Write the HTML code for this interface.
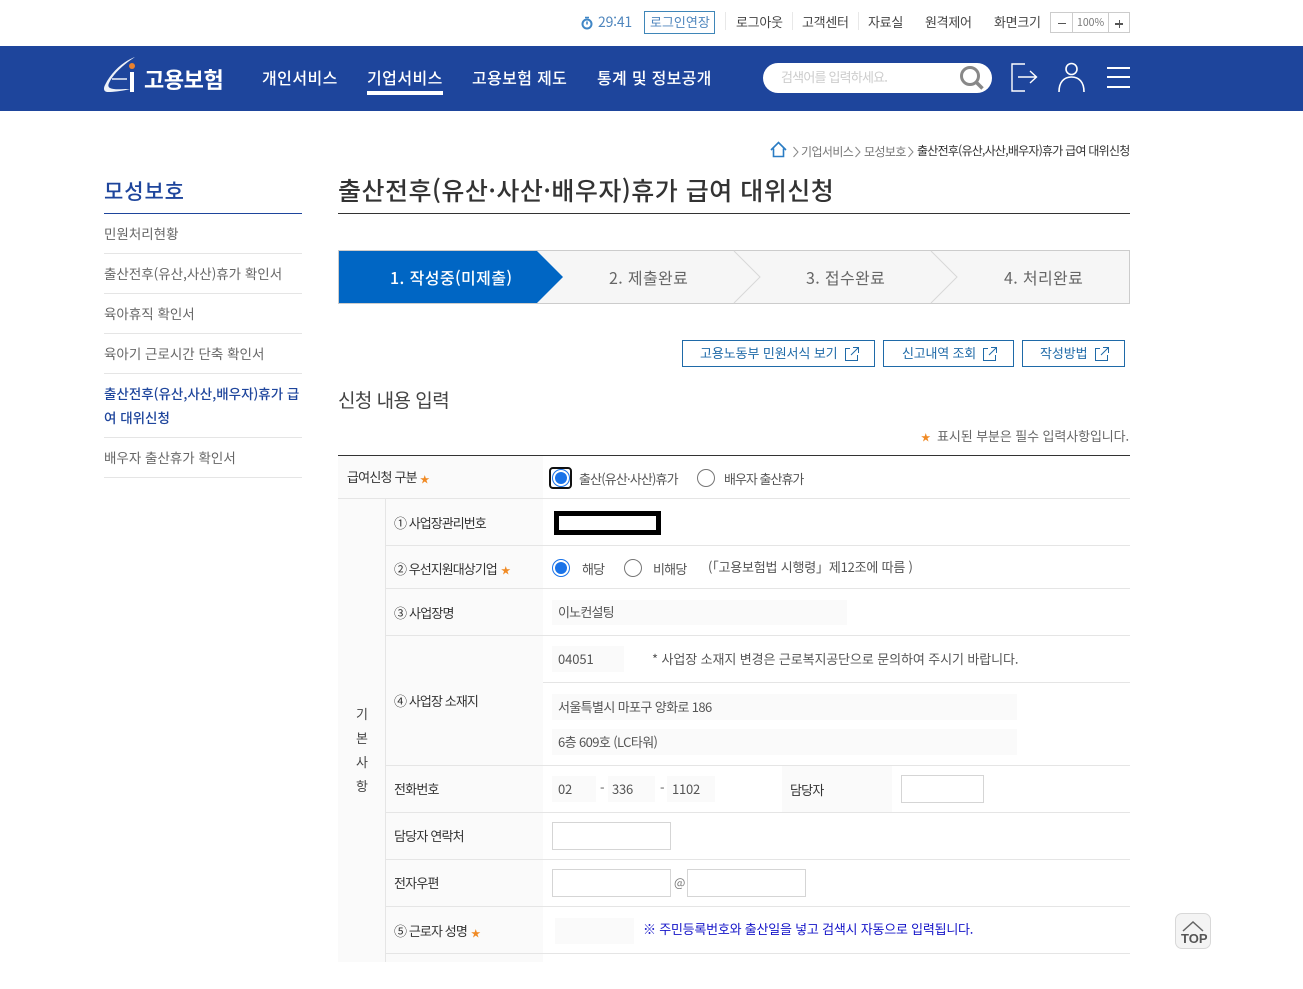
<!DOCTYPE html>
<html lang="ko"><head><meta charset="utf-8"><title>출산전후휴가 급여 대위신청</title>
<style>
html,body{margin:0;padding:0;background:#fff}
body{width:1303px;height:989px;position:relative;overflow:hidden;font-family:"Liberation Sans","Noto Sans CJK KR",sans-serif;color:#444}
.t{position:absolute;white-space:nowrap;line-height:20px;font-size:13px;letter-spacing:-.8px;font-family:"Noto Sans CJK KR",sans-serif;font-weight:400}
.b{position:absolute;box-sizing:border-box}
.w{color:#fff;font-size:16px;font-weight:500;letter-spacing:.45px}
.hl{position:absolute;height:1px;background:#e5e5e5}
.g{position:absolute;background:#fafafa}
.f{position:absolute;background:#fafafa}
.i{position:absolute;box-sizing:border-box;background:#fff;border:1px solid #d5d5d5}
.s{color:#f08a24}
.m{color:#555;font-size:13px}
.side{color:#666;font-size:13.5px;letter-spacing:0}
.top{letter-spacing:-.3px}
.btn{position:absolute;box-sizing:border-box;height:27px;border:1px solid #1f6aa8;background:#fff;top:340px}
.step{color:#666;font-size:16px;letter-spacing:.35px}
.bc{color:#777;font-size:12px;letter-spacing:-.6px}
</style></head><body>

<!-- top bar -->
<svg class="b" style="left:580px;top:16px" width="14" height="14" viewBox="0 0 14 14"><circle cx="7" cy="8" r="4.5" fill="none" stroke="#3f86c6" stroke-width="2"/><path d="M5 1.500h4M7 5.500v3" stroke="#3f86c6" stroke-width="1.600" fill="none"/></svg>
<span class="t" style="left:598px;top:12px;color:#4f86bd;font-size:14px;letter-spacing:-.2px">29:41</span>
<div class="b" style="left:644px;top:11px;width:71px;height:23px;border:1px solid #3f86b8"></div>
<span class="t top" style="left:650px;top:12px;color:#4f86bd;letter-spacing:0">로그인연장</span>
<div class="b" style="left:725px;top:12px;width:1px;height:18px;background:#e8e8e8"></div>
<span class="t top" style="left:736px;top:12px">로그아웃</span>
<div class="b" style="left:792px;top:12px;width:1px;height:18px;background:#e8e8e8"></div>
<span class="t top" style="left:802px;top:12px">고객센터</span>
<div class="b" style="left:858px;top:12px;width:1px;height:18px;background:#e8e8e8"></div>
<span class="t top" style="left:868px;top:12px">자료실</span>
<span class="t top" style="left:925px;top:12px">원격제어</span>
<span class="t top" style="left:994px;top:12px">화면크기</span>
<div class="b" style="left:1050px;top:12px;width:80px;height:21px;border:1px solid #ccc"></div>
<div class="b" style="left:1072px;top:12px;width:1px;height:21px;background:#ccc"></div>
<div class="b" style="left:1108px;top:12px;width:1px;height:21px;background:#ccc"></div>
<div class="b" style="left:1058px;top:23px;width:8px;height:1px;background:#555"></div>
<span class="t" style="left:1077px;top:13px;font-size:10.500px;letter-spacing:0;color:#777">100%</span>
<div class="b" style="left:1115px;top:23px;width:8px;height:1.500px;background:#555"></div>
<div class="b" style="left:1118.500px;top:20px;width:1.500px;height:8px;background:#555"></div>

<!-- header -->
<div class="b" style="left:0;top:46px;width:1303px;height:65px;background:#1e459c"></div>
<svg class="b" style="left:102px;top:55px" width="38" height="40" viewBox="0 0 38 40"><path d="M33 2C22 6 10 16 3 30c-2 4-1 7 3 7 6 0 14-1 22-3-8 0-16 1-20-1-2-1-2-3-1-5C11 19 22 9 33 2z" fill="#eef2f8"/><path d="M10 24h15" stroke="#eef2f8" stroke-width="1.500"/><rect x="28" y="17" width="4" height="20" fill="#fff"/><circle cx="30" cy="11" r="3" fill="#e9822f"/></svg>
<span class="t" style="left:144px;top:68px;color:#fff;font-size:22px;line-height:22px;font-weight:700;letter-spacing:-.4px">고용보험</span>
<span class="t w" style="left:262px;top:67px">개인서비스</span>
<span class="t w" style="left:367px;top:67px">기업서비스</span>
<div class="b" style="left:367px;top:91px;width:76px;height:4px;background:#fff"></div>
<span class="t w" style="left:472px;top:67px;letter-spacing:.35px">고용보험 제도</span>
<span class="t w" style="left:597px;top:67px;letter-spacing:.3px">통계 및 정보공개</span>
<div class="b" style="left:763px;top:63px;width:229px;height:30px;border-radius:15px;background:#fff"></div>
<span class="t" style="left:781px;top:67px;color:#ccc">검색어를 입력하세요.</span>
<svg class="b" style="left:958px;top:64px" width="28" height="28" viewBox="0 0 28 28"><circle cx="12" cy="12" r="8.500" fill="none" stroke="#888" stroke-width="3"/><path d="M18.500 18.500l6 6" stroke="#888" stroke-width="3.500"/></svg>
<svg class="b" style="left:1010px;top:62px" width="30" height="30" viewBox="0 0 30 30" fill="none" stroke="#fff" stroke-width="1.400"><path d="M15 2H2v27h13M8 15h18M20 9l6.500 6-6.500 6"/></svg>
<svg class="b" style="left:1056px;top:61px" width="30" height="32" viewBox="0 0 30 32" fill="none" stroke="#fff" stroke-width="1.600"><circle cx="15.500" cy="8" r="5.500"/><path d="M3 31c0-10 5-15 12.500-15S28 21 28 31"/></svg>
<div class="b" style="left:1107px;top:67px;width:23px;height:2px;background:#fff"></div>
<div class="b" style="left:1107px;top:76px;width:23px;height:2px;background:#fff"></div>
<div class="b" style="left:1107px;top:86px;width:23px;height:2px;background:#fff"></div>

<!-- breadcrumb -->
<svg class="b" style="left:770px;top:141px" width="17" height="17" viewBox="0 0 17 17" fill="none" stroke="#2a7cc4" stroke-width="1.600"><path d="M1 9l7.500-7.500L16 9M3.500 7.500V15.500h10V7.500"/></svg>
<svg class="b" style="left:792px;top:146px" width="122" height="12" viewBox="0 0 122 12" fill="none" stroke="#888"><path d="M1.500 1l4.500 5-4.500 5M63.500 1l4.500 5-4.500 5M116.500 1l4.500 5-4.500 5"/></svg>
<span class="t bc" style="left:801px;top:142px">기업서비스</span>
<span class="t bc" style="left:864px;top:142px">모성보호</span>
<span class="t" style="left:917px;top:141px;color:#333;font-size:12px;letter-spacing:-.75px">출산전후(유산,사산,배우자)휴가 급여 대위신청</span>

<!-- side -->
<span class="t" style="left:104px;top:180px;color:#1e459c;font-size:21px;line-height:22px;font-weight:500;letter-spacing:.9px">모성보호</span>
<div class="b" style="left:104px;top:213px;width:198px;height:1px;background:#1e459c"></div>
<span class="t side" style="left:104px;top:223px">민원처리현황</span>
<div class="hl" style="left:104px;top:253px;width:198px"></div>
<span class="t side" style="left:104px;top:263px">출산전후(유산,사산)휴가 확인서</span>
<div class="hl" style="left:104px;top:293px;width:198px"></div>
<span class="t side" style="left:104px;top:303px">육아휴직 확인서</span>
<div class="hl" style="left:104px;top:333px;width:198px"></div>
<span class="t side" style="left:104px;top:343px">육아기 근로시간 단축 확인서</span>
<div class="hl" style="left:104px;top:373px;width:198px"></div>
<span class="t side" style="left:104px;top:383px;color:#1e459c;font-weight:500">출산전후(유산,사산,배우자)휴가 급</span>
<span class="t side" style="left:104px;top:407px;color:#1e459c;font-weight:500">여 대위신청</span>
<div class="hl" style="left:104px;top:437px;width:198px"></div>
<span class="t side" style="left:104px;top:447px">배우자 출산휴가 확인서</span>
<div class="hl" style="left:104px;top:477px;width:198px"></div>

<!-- title -->
<span class="t" style="left:338px;top:174px;color:#333;font-size:25px;line-height:32px;font-weight:500;letter-spacing:.5px">출산전후(유산·사산·배우자)휴가 급여 대위신청</span>
<div class="b" style="left:338px;top:213px;width:792px;height:1px;background:#333"></div>

<!-- steps -->
<svg class="b" style="left:338px;top:250px" width="792" height="54" viewBox="0 0 792 54">
<rect x=".5" y=".5" width="791" height="53" fill="#f6f6f6" stroke="#ccc"/>
<path d="M396 1l26 26-26 26M593 1l26 26-26 26" fill="none" stroke="#d8d8d8"/>
<path d="M1 1H199L225 27 199 53H1z" fill="#0066c4"/>
</svg>
<span class="t" style="left:390px;top:267px;color:#fff;font-size:16px;font-weight:500;letter-spacing:.4px">1. 작성중(미제출)</span>
<span class="t step" style="left:609px;top:267px">2. 제출완료</span>
<span class="t step" style="left:806px;top:267px">3. 접수완료</span>
<span class="t step" style="left:1004px;top:267px">4. 처리완료</span>

<!-- buttons -->
<div class="btn" style="left:682px;width:193px"></div>
<span class="t" style="left:700px;top:343px;color:#1f6aa8;letter-spacing:-.1px">고용노동부 민원서식 보기</span>
<div class="btn" style="left:883px;width:131px"></div>
<span class="t" style="left:902px;top:343px;color:#1f6aa8;letter-spacing:-.2px">신고내역 조회</span>
<div class="btn" style="left:1022px;width:103px"></div>
<span class="t" style="left:1040px;top:343px;color:#1f6aa8;letter-spacing:-.1px">작성방법</span>
<svg class="b" style="left:845px;top:347px" width="14" height="14" viewBox="0 0 14 14" fill="none" stroke="#1f6aa8"><path d="M5 1.500H.5v12h12V8M8 .5h5.500V6M13 1L6 8"/></svg>
<svg class="b" style="left:983px;top:347px" width="14" height="14" viewBox="0 0 14 14" fill="none" stroke="#1f6aa8"><path d="M5 1.500H.5v12h12V8M8 .5h5.500V6M13 1L6 8"/></svg>
<svg class="b" style="left:1095px;top:347px" width="14" height="14" viewBox="0 0 14 14" fill="none" stroke="#1f6aa8"><path d="M5 1.500H.5v12h12V8M8 .5h5.500V6M13 1L6 8"/></svg>

<!-- section -->
<span class="t" style="left:338px;top:389px;color:#444;font-size:19px;line-height:22px;letter-spacing:-.55px">신청 내용 입력</span>
<span class="t s" style="left:921px;top:427px;font-size:9.500px">★</span>
<span class="t" style="left:937px;top:426px;color:#666;letter-spacing:-.1px">표시된 부분은 필수 입력사항입니다.</span>
<div class="b" style="left:338px;top:455px;width:792px;height:1px;background:#333"></div>

<!-- table backgrounds -->
<div class="g" style="left:338px;top:456px;width:205px;height:42px"></div>
<div class="g" style="left:338px;top:499px;width:47px;height:463px"></div>
<div class="g" style="left:386px;top:499px;width:157px;height:463px"></div>
<div class="b" style="left:385px;top:499px;width:1px;height:463px;background:#e5e5e5"></div>
<div class="hl" style="left:338px;top:498px;width:792px"></div>
<div class="hl" style="left:386px;top:545px;width:744px"></div>
<div class="hl" style="left:386px;top:588px;width:744px"></div>
<div class="hl" style="left:386px;top:635px;width:744px"></div>
<div class="hl" style="left:543px;top:682px;width:587px"></div>
<div class="hl" style="left:386px;top:765px;width:744px"></div>
<div class="hl" style="left:386px;top:812px;width:744px"></div>
<div class="hl" style="left:386px;top:859px;width:744px"></div>
<div class="hl" style="left:386px;top:906px;width:744px"></div>
<div class="hl" style="left:386px;top:953px;width:744px"></div>

<!-- row labels -->
<span class="t m" style="left:347px;top:467px;color:#333">급여신청 구분</span><span class="t s" style="left:420px;top:469px;font-size:9.500px">★</span>
<span class="t m" style="left:394px;top:513px;color:#333;letter-spacing:-.95px">① 사업장관리번호</span>
<span class="t m" style="left:394px;top:559px;color:#333;letter-spacing:-.95px">② 우선지원대상기업</span><span class="t s" style="left:501px;top:560px;font-size:9.500px">★</span>
<span class="t m" style="left:394px;top:603px;color:#333">③ 사업장명</span>
<span class="t m" style="left:394px;top:691px;color:#333;letter-spacing:-.9px">④ 사업장 소재지</span>
<span class="t m" style="left:394px;top:779px;color:#333">전화번호</span>
<span class="t m" style="left:394px;top:826px;color:#333">담당자 연락처</span>
<span class="t m" style="left:394px;top:873px;color:#333">전자우편</span>
<span class="t m" style="left:394px;top:921px;color:#333;letter-spacing:-.9px">⑤ 근로자 성명</span><span class="t s" style="left:471px;top:923px;font-size:9.500px">★</span>
<span class="t m" style="left:356px;top:704px;color:#444">기</span>
<span class="t m" style="left:356px;top:728px;color:#444">본</span>
<span class="t m" style="left:356px;top:752px;color:#444">사</span>
<span class="t m" style="left:356px;top:776px;color:#444">항</span>

<!-- row 1 -->
<div class="b" style="left:549px;top:467px;width:23px;height:22px;border:2px solid #111;border-radius:4px"></div>
<svg class="b" style="left:552px;top:469px" width="18" height="18" viewBox="0 0 18 18"><circle cx="9" cy="9" r="8.500" fill="#fff" stroke="#1a73e8"/><circle cx="9" cy="9" r="6" fill="#1a73e8"/></svg>
<span class="t m" style="left:579px;top:469px;color:#555;letter-spacing:-.85px">출산(유산·사산)휴가</span>
<svg class="b" style="left:697px;top:469px" width="18" height="18" viewBox="0 0 18 18"><circle cx="9" cy="9" r="8.500" fill="#fff" stroke="#767676"/></svg>
<span class="t m" style="left:724px;top:469px;color:#555;letter-spacing:-1px">배우자 출산휴가</span>

<!-- business number -->
<div class="b" style="left:554px;top:511px;width:107px;height:24px;border:5px solid #000;background:#fff"></div>

<!-- priority -->
<svg class="b" style="left:552px;top:559px" width="18" height="18" viewBox="0 0 18 18"><circle cx="9" cy="9" r="8.500" fill="#fff" stroke="#1a73e8"/><circle cx="9" cy="9" r="6" fill="#1a73e8"/></svg>
<span class="t m" style="left:582px;top:559px;color:#555">해당</span>
<svg class="b" style="left:624px;top:559px" width="18" height="18" viewBox="0 0 18 18"><circle cx="9" cy="9" r="8.500" fill="#fff" stroke="#767676"/></svg>
<span class="t m" style="left:653px;top:559px;color:#555">비해당</span>
<span class="t m" style="left:708px;top:557px;color:#555;letter-spacing:-.2px">(「고용보험법 시행령」제12조에 따름 )</span>

<!-- name -->
<div class="f" style="left:552px;top:600px;width:295px;height:25px"></div>
<span class="t m" style="left:558px;top:602px;color:#555">이노컨설팅</span>

<!-- address -->
<div class="f" style="left:552px;top:646px;width:72px;height:26px"></div>
<span class="t m" style="left:558px;top:649px;color:#555;letter-spacing:-.1px">04051</span>
<span class="t m" style="left:652px;top:649px;color:#555;letter-spacing:-.1px">* 사업장 소재지 변경은 근로복지공단으로 문의하여 주시기 바랍니다.</span>
<div class="f" style="left:552px;top:694px;width:465px;height:26px"></div>
<span class="t m" style="left:558px;top:697px;color:#555;letter-spacing:-.62px">서울특별시 마포구 양화로 186</span>
<div class="f" style="left:552px;top:729px;width:465px;height:26px"></div>
<span class="t m" style="left:558px;top:732px;color:#555;letter-spacing:-.6px">6층 609호 (LC타워)</span>

<!-- phone -->
<div class="f" style="left:552px;top:776px;width:44px;height:26px"></div>
<span class="t m" style="left:558px;top:779px;color:#555;letter-spacing:-.2px">02</span>
<span class="t m" style="left:600px;top:778px;color:#555">-</span>
<div class="f" style="left:608px;top:776px;width:47px;height:26px"></div>
<span class="t m" style="left:612px;top:779px;color:#555;letter-spacing:-.2px">336</span>
<span class="t m" style="left:660px;top:778px;color:#555">-</span>
<div class="f" style="left:667px;top:776px;width:48px;height:26px"></div>
<span class="t m" style="left:672px;top:779px;color:#555;letter-spacing:-.2px">1102</span>
<div class="g" style="left:782px;top:766px;width:110px;height:46px"></div>
<span class="t m" style="left:790px;top:780px;color:#333">담당자</span>
<div class="i" style="left:901px;top:775px;width:83px;height:28px"></div>

<!-- contact -->
<div class="i" style="left:552px;top:822px;width:119px;height:28px"></div>
<div class="i" style="left:552px;top:869px;width:119px;height:28px"></div>
<span class="t m" style="left:674px;top:873px;color:#777;letter-spacing:0;font-size:12px">@</span>
<div class="i" style="left:687px;top:869px;width:119px;height:28px"></div>

<!-- worker -->
<div class="f" style="left:555px;top:918px;width:79px;height:26px"></div>
<span class="t" style="left:643px;top:919px;color:#1414c8;letter-spacing:-.22px">※ 주민등록번호와 출산일을 넣고 검색시 자동으로 입력됩니다.</span>

<!-- top button -->
<div class="b" style="left:1175px;top:913px;width:36px;height:36px;border-radius:7px;background:#f4f4f4;border:1px solid #d8d8d8"></div>
<svg class="b" style="left:1182px;top:920px" width="22" height="12" viewBox="0 0 22 12"><path d="M1 11L11 2l10 9" fill="none" stroke="#666" stroke-width="1.500"/></svg>
<span class="t" style="left:1181px;top:929px;color:#555;font-size:13px;font-weight:700;letter-spacing:0;font-family:'Liberation Sans',sans-serif">TOP</span>

</body></html>
